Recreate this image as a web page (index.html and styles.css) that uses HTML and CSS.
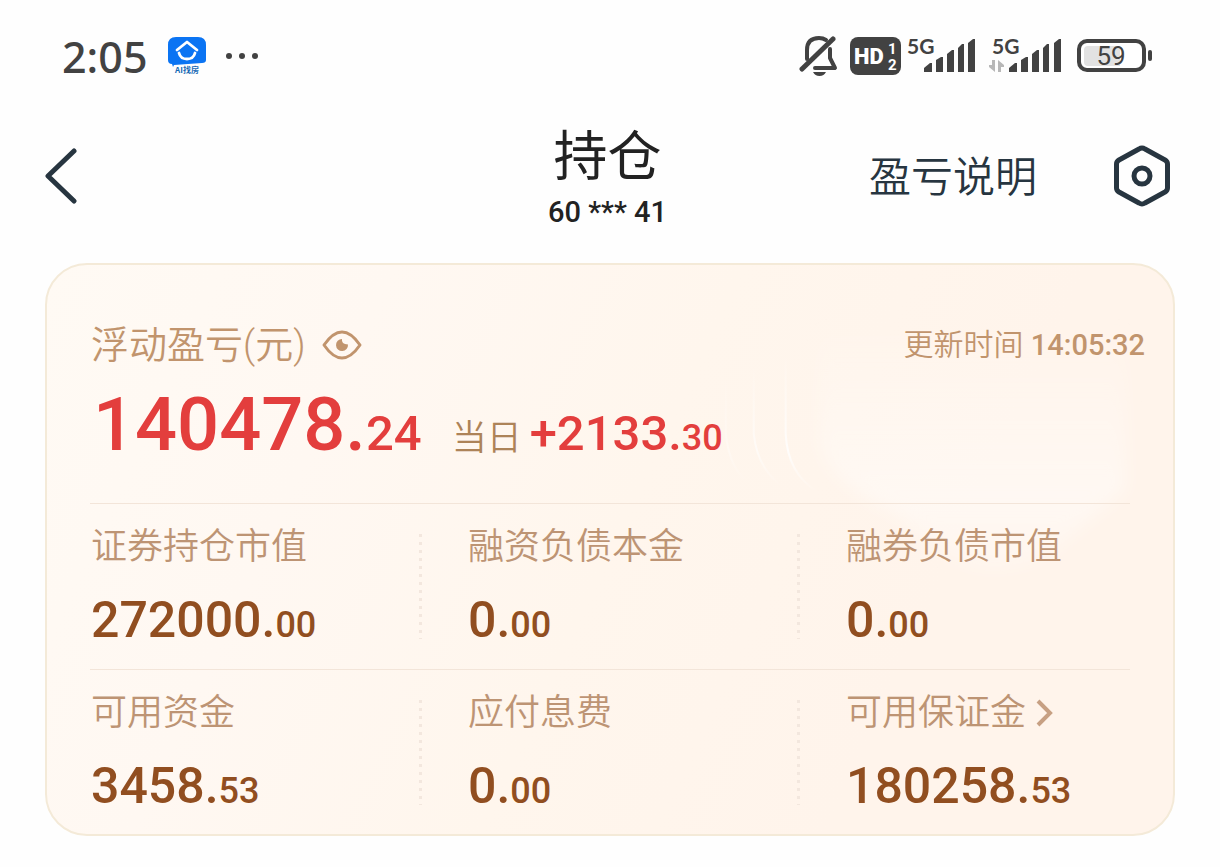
FILE: index.html
```html
<!DOCTYPE html>
<html lang="zh-CN">
<head>
<meta charset="utf-8">
<meta name="viewport" content="width=device-width, initial-scale=1">
<title>持仓</title>
<link rel="stylesheet" href="styles.css">
</head>
<body>
<div class="status">
  <time class="clock">2:05</time>
  <svg class="app-icon" width="40" height="40" viewBox="0 0 40 40" role="img" aria-label="AI找房">
    <path fill="#0b74f3" d="M9 1h22q8 0 8 8v15q0 3-4 3l-14 1-14 1-1 2-1-3q-4 0-4-4V9q0-8 8-8z"/>
    <path fill="none" stroke="#fff" stroke-width="2.800" stroke-linecap="round" stroke-linejoin="round" d="M10 14l10-8 10 8M12 17c2 8 14 8 16 0"/>
    <text class="app-name" x="20" y="37" text-anchor="middle">AI找房</text>
  </svg>
  <svg class="more" width="36" height="8" viewBox="0 0 36 8" aria-hidden="true"><g fill="#424242"><circle cx="5" cy="4" r="3"/><circle cx="18" cy="4" r="3"/><circle cx="31" cy="4" r="3"/></g></svg>
  <div class="system">
    <svg width="40" height="42" viewBox="0 0 40 42" fill="none" stroke="#424242" stroke-width="4" stroke-linecap="round" stroke-linejoin="round" aria-hidden="true">
      <path d="M8 24V15Q8 3 20 3q4 0 7 2"/>
      <path stroke-width="5" d="M34 4L3 34"/>
      <path d="M31 14v9l5 10H16"/>
      <path fill="#424242" stroke="none" d="M14 37h13q-2 4-6.500 4T14 37z"/>
    </svg>
    <svg class="hd" width="51" height="38" viewBox="0 0 51 38" role="img" aria-label="HD 1 2">
      <rect width="51" height="38" rx="8" fill="#424242"/>
      <text class="hd-text" x="4" y="27">HD</text>
      <text class="hd-num" x="38" y="17">1</text>
      <text class="hd-num" x="38" y="33">2</text>
    </svg>
    <svg class="signal sim-one" width="70" height="44" viewBox="0 0 70 44" role="img" aria-label="5G">
      <text class="net" x="0" y="20">5G</text>
      <g fill="#424242"><path d="M17 38v-4l6-5h2v9z"/><path d="M29 38V26l5-3h2v15z"/><path d="M40 38V20l5-4h2v22z"/><path d="M51 38V14l4-4h2v28z"/><path d="M61 38V9l5-4h2v33z"/></g>
    </svg>
    <svg class="signal sim-two" width="73" height="44" viewBox="0 0 73 44" role="img" aria-label="5G">
      <text class="net" x="3" y="20">5G</text>
      <path fill="#b8b8b8" d="M0 31h3v-5h3v12L0 33zM9 26l6 5v2h-3v5H9z"/>
      <g fill="#424242"><path d="M20 38v-4l6-5h2v9z"/><path d="M32 38V26l5-3h2v15z"/><path d="M43 38V20l5-4h2v22z"/><path d="M54 38V14l4-4h2v28z"/><path d="M65 38V9l5-4h2v33z"/></g>
    </svg>
    <svg class="battery" width="76" height="34" viewBox="0 0 76 34" role="img" aria-label="59%">
      <rect x="2" y="2" width="65" height="29" rx="8" fill="#fff" stroke="#424242" stroke-width="4"/>
      <path fill="#e2e2e2" d="M11 7h32v20H11q-4 0-4-4V11q0-4 4-4z"/>
      <rect x="71" y="11" width="4" height="11" rx="2" fill="#424242"/>
      <text class="battery-text" x="34" y="26" text-anchor="middle">59</text>
    </svg>
  </div>
</div>

<header class="header">
  <button class="icon-button back" aria-label="返回">
    <svg width="32" height="56" viewBox="0 0 32 56" fill="none" stroke="#273540" stroke-width="5" stroke-linecap="round" stroke-linejoin="round"><path d="M29 3L3 28l26 25"/></svg>
  </button>
  <div class="heading">
    <h1 class="title">持仓</h1>
    <p class="account">60 *** 41</p>
  </div>
  <div class="actions">
    <a class="help" href="#help">盈亏说明</a>
    <button class="icon-button" aria-label="设置">
      <svg width="56" height="62" viewBox="0 0 56 62" fill="none" stroke="#273540" stroke-width="5"><path stroke-linejoin="round" d="M25 4q3-2 6 0l20 11q2.500 1.500 2.500 4v24q0 2.500-2.500 4L31 58q-3 2-6 0L5 47q-2.500-1.500-2.500-4V19q0-2.500 2.500-4z"/><circle cx="28" cy="31" r="8"/></svg>
    </button>
  </div>
</header>

<main class="card">
  <svg class="glow" viewBox="0 0 1128 572" preserveAspectRatio="none" aria-hidden="true">
    <defs>
      <linearGradient id="fade" x1="0" y1="0" x2="0" y2="1"><stop offset="0" stop-color="#fff" stop-opacity="0"/><stop offset=".7" stop-color="#fff" stop-opacity=".4"/><stop offset="1" stop-color="#fff" stop-opacity=".2"/></linearGradient>
      <linearGradient id="line" x1="0" y1="0" x2="0" y2="1"><stop offset="0" stop-color="#fff" stop-opacity="0"/><stop offset=".7" stop-color="#fff" stop-opacity=".8"/><stop offset="1" stop-color="#fff" stop-opacity="0"/></linearGradient>
      <filter id="soft"><feGaussianBlur stdDeviation="8"/></filter>
    </defs>
    <path fill="url(#fade)" filter="url(#soft)" d="M774 60V175Q778 215 850 250Q890 285 920 300Q965 315 1010 285L1080 225V60z"/>
    <g fill="none" stroke="url(#line)" stroke-width="2"><path d="M740 90V170Q742 210 772 228"/><path stroke-opacity=".7" d="M708 100V170Q712 205 736 222"/><path stroke-opacity=".4" d="M680 110V170Q684 205 702 218"/></g>
  </svg>

  <section class="summary">
    <div class="summary-head">
      <h2 class="profit-label">浮动盈亏(元)</h2>
      <button class="icon-button eye" aria-label="隐藏金额">
        <svg width="40" height="30" viewBox="0 0 40 30"><path fill="none" stroke="#c1946d" stroke-width="3" stroke-linejoin="round" d="M2 15Q11 2 20 2t18 13Q29 28 20 28T2 15z"/><path fill="#c1946d" d="M20 9q-1 5 6 5.500A6 6 0 1 1 20 9z"/></svg>
      </button>
      <p class="updated">更新时间 <time>14:05:32</time></p>
    </div>
    <p class="profit">
      <span class="total">140478.<span class="total-cents">24</span></span>
      <span class="day">当日</span>
      <span class="change">+2133.<span class="cents">30</span></span>
    </p>
  </section>

  <dl class="stats">
    <div class="stat"><dt>证券持仓市值</dt><dd>272000.<span class="cents">00</span></dd></div>
    <div class="stat"><dt>融资负债本金</dt><dd>0.<span class="cents">00</span></dd></div>
    <div class="stat"><dt>融券负债市值</dt><dd>0.<span class="cents">00</span></dd></div>
  </dl>
  <dl class="stats">
    <div class="stat"><dt>可用资金</dt><dd>3458.<span class="cents">53</span></dd></div>
    <div class="stat"><dt>应付息费</dt><dd>0.<span class="cents">00</span></dd></div>
    <div class="stat"><dt><a class="margin-link" href="#margin">可用保证金<svg width="18" height="28" viewBox="0 0 18 28" fill="none" stroke="#c7a083" stroke-width="4" aria-hidden="true"><path d="M2 2l12 12L2 26"/></svg></a></dt><dd>180258.<span class="cents">53</span></dd></div>
  </dl>
</main>
</body>
</html>
```
FILE: styles.css
```css
* {
  box-sizing: border-box;
}

body {
  margin: 0;
  background: #fefefe;
  color: #222;
  font-family: Roboto, "Noto Sans CJK SC", sans-serif;
}

h1, h2, p, dl, dd {
  margin: 0;
  font-weight: 350;
}

a {
  color: inherit;
  text-decoration: none;
}

svg {
  display: block;
  flex: none;
}

.icon-button {
  display: block;
  padding: 0;
  border: 0;
  background: none;
  cursor: pointer;
}

/* Status bar */
.status {
  display: flex;
  align-items: center;
  height: 112px;
  padding: 0 67px 0 62px;
  color: #424242;
}

.clock {
  padding-top: 2px;
  font: 500 43px/48px "Noto Sans", sans-serif;
}

.app-icon {
  margin-left: 20px;
}

.more {
  margin-left: 17px;
}

.app-name {
  fill: #1769b5;
  font: 700 8px "Noto Sans CJK SC", sans-serif;
}

.system {
  display: flex;
  align-items: center;
  margin-left: auto;
}

.hd {
  margin-left: 11px;
}

.hd-text {
  fill: #fff;
  font: 900 22px Roboto, sans-serif;
}

.hd-num {
  fill: #fff;
  font: 700 15px Roboto, sans-serif;
}

.net {
  fill: #424242;
  font: 700 21px Lato, sans-serif;
}

.sim-one {
  margin-left: 6px;
}

.sim-two {
  margin-left: 12px;
}

.battery {
  margin-left: 15px;
}

.battery-text {
  fill: #424242;
  font: 400 26px Roboto, sans-serif;
}

/* Title bar */
.header {
  display: grid;
  grid-template-columns: 1fr auto 1fr;
  align-items: center;
  padding: 9px 50px 22px 45px;
}

.back {
  justify-self: start;
}

.heading {
  text-align: center;
}

.title {
  font-size: 54px;
  font-weight: 400;
  line-height: 74px;
}

.account {
  padding-bottom: 2px;
  font-size: 29px;
  font-weight: 500;
  line-height: 34px;
}

.actions {
  display: flex;
  align-items: center;
  justify-content: flex-end;
  gap: 77px;
}

.help {
  padding-top: 4px;
  color: #273540;
  font-size: 42px;
  font-weight: 350;
  line-height: 56px;
}

/* Account card */
.card {
  position: relative;
  margin: 10px 45px 31px;
  border: 2px solid #f4ead8;
  border-radius: 42px;
  background: linear-gradient(115deg, #fffaf4 0%, #fff8f2 25%, #fff6ed 50%, #fff4eb 75%, #fff4eb 100%);
}

.glow {
  position: absolute;
  inset: 0;
  width: 100%;
  height: 100%;
}

.summary {
  position: relative;
  padding: 50px 28px 0 44px;
}

.summary-head {
  display: flex;
  align-items: center;
  height: 60px;
  color: #c1946d;
}

.profit-label {
  font-size: 38px;
  line-height: 56px;
}

.eye {
  margin-left: 16px;
}

.updated {
  margin-left: auto;
  font-size: 30px;
  line-height: 40px;
}

.updated time {
  font-size: 29px;
  font-weight: 500;
}

.profit {
  display: flex;
  align-items: baseline;
  height: 128px;
  padding-left: 2px;
  color: #e33e3d;
  font-weight: 500;
  line-height: 100px;
}

.total {
  font-size: 74px;
}

.total-cents,
.change {
  font-size: 49px;
}

.day {
  margin: 0 8px 0 30px;
  color: #ad8358;
  font-size: 35px;
  font-weight: 350;
}

.cents {
  font-size: 36px;
}

.stats {
  position: relative;
  display: grid;
  grid-template-columns: 377fr 378fr 285fr;
  height: 166px;
  margin: 0 43px;
  border-top: 1px solid #f3e5d9;
}

.stats:last-child {
  height: 165px;
}

.stat {
  padding: 19px 0 0 1px;
}

.stat:not(:last-child) {
  background: repeating-linear-gradient(#f3e7de 0 3px, transparent 3px 8px) right 45px top 30px / 3px 105px no-repeat;
}

.stat dt {
  color: #bd9474;
  font-size: 36px;
  font-weight: 350;
  line-height: 48px;
}

.stat dd {
  padding-top: 19px;
  color: #914e20;
  font-size: 50px;
  font-weight: 500;
  line-height: 60px;
}

.margin-link {
  display: flex;
  align-items: center;
  gap: 10px;
}
```
